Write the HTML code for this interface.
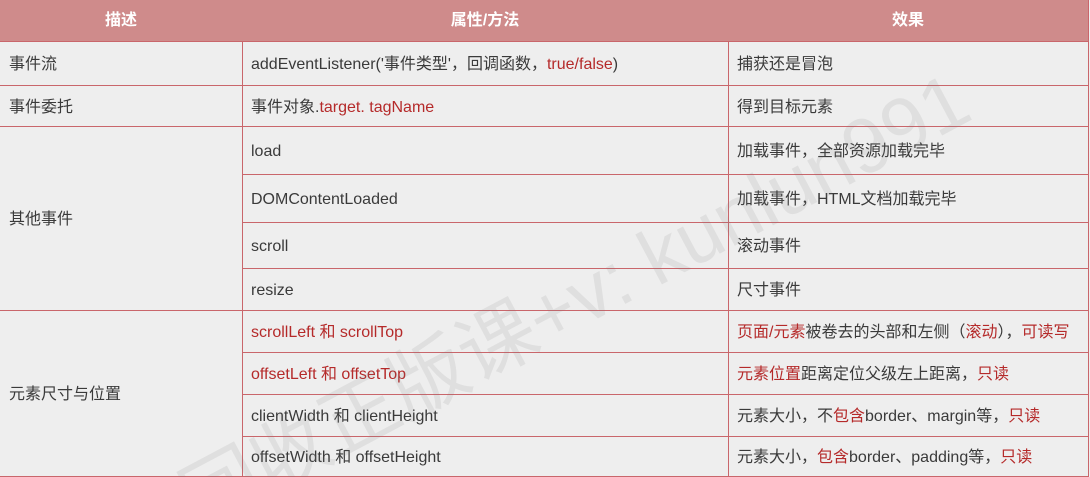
<!DOCTYPE html><html><head><meta charset="utf-8"><style>
html,body{margin:0;width:1090px;height:477px;overflow:hidden}
body{background:#eeeeee;font-family:"Liberation Sans","Noto Sans CJK SC",sans-serif;font-size:16px;color:#3a3a3a;position:relative}
.c{position:absolute;box-sizing:border-box;border-right:1px solid #c9666b;border-bottom:1px solid #c9666b;display:flex;align-items:center;padding-left:9px;padding-top:4px;white-space:nowrap;line-height:20px}
.c>span{display:block;height:20px;line-height:20px}
.h{background:#cf8b8b;color:#fff;font-weight:bold;justify-content:center;padding:0}
.r{color:#b52a2a}
svg.wm{position:absolute;left:0;top:0;pointer-events:none}
</style></head><body>
<div class="c h" style="left:0;top:0;width:243px;height:42px"><span>描述</span></div>
<div class="c h" style="left:242px;top:0;width:487px;height:42px"><span>属性/方法</span></div>
<div class="c h" style="left:728px;top:0;width:361px;height:42px"><span>效果</span></div>

<div class="c" style="left:0;top:41px;width:243px;height:45px"><span>事件流</span></div>
<div class="c" style="left:242px;top:41px;width:487px;height:45px"><span>addEventListener('事件类型'，回调函数，<span class="r">true/false</span>)</span></div>
<div class="c" style="left:728px;top:41px;width:361px;height:45px"><span>捕获还是冒泡</span></div>

<div class="c" style="left:0;top:85px;width:243px;height:42px"><span>事件委托</span></div>
<div class="c" style="left:242px;top:85px;width:487px;height:42px"><span>事件对象.<span class="r">target. tagName</span></span></div>
<div class="c" style="left:728px;top:85px;width:361px;height:42px"><span>得到目标元素</span></div>

<div class="c" style="left:0;top:126px;width:243px;height:185px"><span>其他事件</span></div>
<div class="c" style="left:242px;top:126px;width:487px;height:49px"><span>load</span></div>
<div class="c" style="left:728px;top:126px;width:361px;height:49px"><span>加载事件，全部资源加载完毕</span></div>
<div class="c" style="left:242px;top:174px;width:487px;height:49px"><span>DOMContentLoaded</span></div>
<div class="c" style="left:728px;top:174px;width:361px;height:49px"><span>加载事件，HTML文档加载完毕</span></div>
<div class="c" style="left:242px;top:222px;width:487px;height:47px"><span>scroll</span></div>
<div class="c" style="left:728px;top:222px;width:361px;height:47px"><span>滚动事件</span></div>
<div class="c" style="left:242px;top:268px;width:487px;height:43px"><span>resize</span></div>
<div class="c" style="left:728px;top:268px;width:361px;height:43px"><span>尺寸事件</span></div>

<div class="c" style="left:0;top:310px;width:243px;height:167px"><span>元素尺寸与位置</span></div>
<div class="c" style="left:242px;top:310px;width:487px;height:43px"><span class="r">scrollLeft 和 scrollTop</span></div>
<div class="c" style="left:728px;top:310px;width:361px;height:43px"><span><span class="r">页面/元素</span>被卷去的头部和左侧（<span class="r">滚动</span>），<span class="r">可读写</span></span></div>
<div class="c" style="left:242px;top:352px;width:487px;height:43px"><span class="r">offsetLeft 和 offsetTop</span></div>
<div class="c" style="left:728px;top:352px;width:361px;height:43px"><span><span class="r">元素位置</span>距离定位父级左上距离，<span class="r">只读</span></span></div>
<div class="c" style="left:242px;top:394px;width:487px;height:43px"><span>clientWidth 和 clientHeight</span></div>
<div class="c" style="left:728px;top:394px;width:361px;height:43px"><span>元素大小，不<span class="r">包含</span>border、margin等，<span class="r">只读</span></span></div>
<div class="c" style="left:242px;top:436px;width:487px;height:41px"><span>offsetWidth 和 offsetHeight</span></div>
<div class="c" style="left:728px;top:436px;width:361px;height:41px"><span>元素大小，<span class="r">包含</span>border、padding等，<span class="r">只读</span></span></div>

<svg class="wm" width="1090" height="477" viewBox="0 0 1090 477"><text x="0" y="0" transform="translate(200,530) rotate(-28)" font-size="78" fill="rgba(120,120,120,0.13)" font-family="Liberation Sans, Noto Sans CJK SC, sans-serif">回收正版课+v: kunlun991</text></svg>
</body></html>
